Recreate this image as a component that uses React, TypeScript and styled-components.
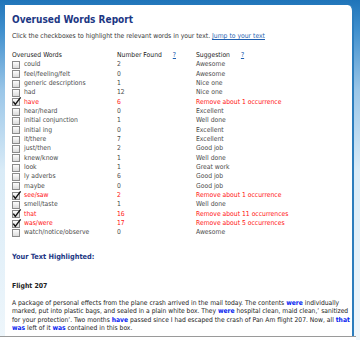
import React from 'react';
import styled, { createGlobalStyle } from 'styled-components';

const GlobalStyle = createGlobalStyle`
    html, body {
        margin: 0;
        padding: 0;
    }
    body {
        width: 360px;
        height: 340px;
        overflow: hidden;
        font-family: 'DejaVu Sans Condensed', 'DejaVu Sans', Tahoma, sans-serif;
    }
`;

interface IRow {
    word: string;
    count: number;
    suggestion: string;
    checked?: boolean;
}

const rows: IRow[] = [
    { word: 'could', count: 2, suggestion: 'Awesome' },
    { word: 'feel/feeling/felt', count: 0, suggestion: 'Awesome' },
    { word: 'generic descriptions', count: 1, suggestion: 'Nice one' },
    { word: 'had', count: 12, suggestion: 'Nice one' },
    { word: 'have', count: 6, suggestion: 'Remove about 1 occurrence', checked: true },
    { word: 'hear/heard', count: 0, suggestion: 'Excellent' },
    { word: 'initial conjunction', count: 1, suggestion: 'Well done' },
    { word: 'initial ing', count: 0, suggestion: 'Excellent' },
    { word: 'it/there', count: 7, suggestion: 'Excellent' },
    { word: 'just/then', count: 2, suggestion: 'Good job' },
    { word: 'knew/know', count: 1, suggestion: 'Well done' },
    { word: 'look', count: 1, suggestion: 'Great work' },
    { word: 'ly adverbs', count: 6, suggestion: 'Good job' },
    { word: 'maybe', count: 0, suggestion: 'Good job' },
    { word: 'see/saw', count: 2, suggestion: 'Remove about 1 occurrence', checked: true },
    { word: 'smell/taste', count: 1, suggestion: 'Well done' },
    { word: 'that', count: 16, suggestion: 'Remove about 11 occurrences', checked: true },
    { word: 'was/were', count: 17, suggestion: 'Remove about 5 occurrences', checked: true },
    { word: 'watch/notice/observe', count: 0, suggestion: 'Awesome' }
];

const CheckBox = ({ checked }: { checked?: boolean }) => (
    <Box width="10" height="9" viewBox="0 0 10 9">
        <defs>
            <linearGradient id="cbg" x1="0" y1="0" x2="0" y2="1">
                <stop offset="0" stopColor="#ffffff" />
                <stop offset="1" stopColor="#d8d8d8" />
            </linearGradient>
        </defs>
        <rect x="0.5" y="1.5" width="7" height="7" fill="url(#cbg)" stroke="#8a8a8a" strokeWidth="1" />
        {checked && <path d="M1.3 4.6 L3.3 7.4 L8.6 0.4" fill="none" stroke="#111" strokeWidth="1.4" />}
    </Box>
);

export default function App() {
    return (
        <>
            <GlobalStyle />
            <Page>
                <Panel>
                    <Title>Overused Words Report</Title>
                    <Intro>
                        Click the checkboxes to highlight the relevant words in your text. <Link>Jump to your text</Link>
                    </Intro>
                    <Table>
                        <HeadCell>Overused Words</HeadCell>
                        <HeadCell>
                            Number Found <Help>?</Help>
                        </HeadCell>
                        <HeadCell>
                            Suggestion <Help>?</Help>
                        </HeadCell>
                        {rows.map((r) => (
                            <React.Fragment key={r.word}>
                                <WordCell $on={r.checked}>
                                    <CheckBox checked={r.checked} />
                                    {r.word}
                                </WordCell>
                                <Cell $on={r.checked}>{r.count}</Cell>
                                <Cell $on={r.checked}>{r.suggestion}</Cell>
                            </React.Fragment>
                        ))}
                    </Table>
                    <SubTitle>Your Text Highlighted:</SubTitle>
                    <StoryTitle>Flight 207</StoryTitle>
                    <Story>
                        <Line>
                            A package of personal effects from the plane crash arrived in the mail today. The contents{' '}
                            <Mark>were</Mark> individually
                        </Line>
                        <Line>
                            marked, put into plastic bags, and sealed in a plain white box. They <Mark>were</Mark> hospital
                            clean, maid clean,&#8217; sanitized
                        </Line>
                        <Line>
                            for your protection&#8217;. Two months <Mark>have</Mark> passed since I had escaped the crash of
                            Pan Am flight 207. Now, all <Mark>that</Mark>
                        </Line>
                        <Line>
                            <Mark>was</Mark> left of it <Mark>was</Mark> contained in this box.
                        </Line>
                    </Story>
                </Panel>
                <Footer />
            </Page>
        </>
    );
}

const Page = styled.div`
    width: 360px;
    height: 340px;
    background: linear-gradient(to bottom, #1f74b9 0px, #3f8fcd 30px, #9ac6e8 90px, #d9ebf7 170px, #eef6fb 340px);
    padding-top: 5px;
    box-sizing: border-box;
    display: flex;
    flex-direction: column;
`;

const Panel = styled.div`
    margin-left: 5px;
    width: 349px;
    height: 332px;
    background: #fff;
    border-top-right-radius: 6px;
    border-right: 2px solid #2c7dbd;
    box-sizing: border-box;
    padding: 7px 0 0 7px;
    display: flex;
    flex-direction: column;
`;

const Footer = styled.div`
    height: 3px;
    border-top: 1px solid #9a9a9a;
    background: #fff;
    width: 356px;
`;

const Title = styled.h1`
    margin: 0;
    font-family: 'DejaVu Sans Condensed', 'DejaVu Sans', sans-serif;
    font-weight: bold;
    font-size: 10px;
    line-height: 16px;
    color: #1c3784;
`;

const Intro = styled.p`
    margin: 4px 0 0;
    font-size: 6.75px;
    line-height: 9px;
    color: #333;
`;

const Link = styled.a`
    color: #1f5fb0;
    text-decoration: underline;
`;

const Table = styled.div`
    margin-top: 10px;
    display: grid;
    grid-template-columns: 105px 79px 1fr;
    grid-auto-rows: 9.33px;
    font-size: 6.75px;
    line-height: 9.33px;
    color: #4a4a4a;
`;

const HeadCell = styled.div`
    color: #222;
    white-space: nowrap;
`;

const Help = styled.a`
    color: #1f5fb0;
    text-decoration: underline;
    margin-left: 9px;
`;

const Cell = styled.div<{ $on?: boolean }>`
    white-space: nowrap;
    color: ${(p) => (p.$on ? '#ff1010' : '#4a4a4a')};
`;

const WordCell = styled(Cell)`
    display: flex;
    align-items: center;
    gap: 2px;
`;

const Box = styled.svg`
    display: block;
    flex: none;
    margin-top: -1px;
`;

const SubTitle = styled.h2`
    margin: 14px 0 0;
    font-size: 7.3px;
    line-height: 10px;
    font-weight: bold;
    color: #1c3784;
`;

const StoryTitle = styled.h3`
    margin: 19px 0 0;
    font-size: 6.9px;
    line-height: 10px;
    font-weight: bold;
    color: #222;
`;

const Story = styled.div`
    margin-top: 8px;
    font-size: 6.7px;
    line-height: 8.5px;
    color: #222;
`;

const Line = styled.div`
    white-space: nowrap;
`;

const Mark = styled.span`
    color: #0a1ff0;
    font-weight: bold;
`;
